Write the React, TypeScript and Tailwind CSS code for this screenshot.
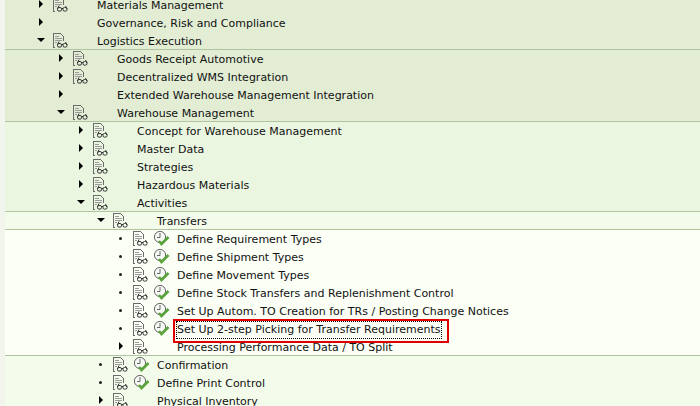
function Doc() {
  return (
    <svg width="17" height="18" viewBox="0 0 17 18" className="shrink-0">
      <g shapeRendering="crispEdges">
        <path d="M1.5 15V1.5H8.5L11.5 4.5V9" fill="none" stroke="#6b6b6b" />
        <path d="M1 15.5h2" stroke="#6b6b6b" />
        <path d="M3 4h4M3 6h7M3 8h7M3 10h2" stroke="#9a9a9a" />
      </g>
      <g fill="none" stroke="#333" strokeWidth="1">
        <rect x="5.5" y="11.5" width="4" height="3.6" rx="1.4" />
        <rect x="11" y="11.5" width="4" height="3.6" rx="1.4" />
        <path d="M9.5 12.5h1.5M5.5 13 7 9.5M15 13 13.5 10" />
      </g>
    </svg>
  );
}

function Clock() {
  return (
    <svg width="18" height="18" viewBox="0 0 18 18" className="shrink-0">
      <circle cx="8" cy="7" r="5.6" fill="#f7f9f5" stroke="#666" />
      <path d="M8 3v4.5H5" fill="none" stroke="#666" />
      <path d="M7 11 9.5 14 16.5 7" fill="none" stroke="#5aa33c" strokeWidth="2.6" />
    </svg>
  );
}

function Marker({ kind }: { kind: "r" | "d" | "b" }) {
  return (
    <span className="mb-[2px] flex h-[9px] w-[9px] shrink-0 items-center justify-center">
      {kind === "r" && <span className="h-0 w-0 border-y-[4px] border-l-[4px] border-y-transparent border-l-black" />}
      {kind === "d" && <span className="h-0 w-0 border-x-[4px] border-t-[4px] border-x-transparent border-t-black" />}
      {kind === "b" && <span className="h-[3px] w-[3px] rounded-full bg-[#222]" />}
    </span>
  );
}

type RowP = { level: number; kind: "r" | "d" | "b"; doc?: boolean; clock?: boolean; text: string; selected?: boolean; line?: boolean };

function Row({ level, kind, doc = true, clock, text, selected, line }: RowP) {
  const pad = ["pl-[31px]", "pl-[51px]", "pl-[71px]", "pl-[91px]", "pl-[111px]"][level];
  return (
    <div className={`flex h-[18px] items-center ${pad} ${line ? "shadow-[inset_0_-1px_0_#b0c4a0]" : ""}`}>
      <Marker kind={kind} />
      <span className="ml-[7px] flex w-[20px] shrink-0 items-center">{doc && <Doc />}</span>
      {clock ? (
        <span className="flex w-[25px] shrink-0 items-center"><Clock /></span>
      ) : (
        <span className="w-[25px] shrink-0" />
      )}
      <span className="pt-[2px]">
        <span className={`relative block whitespace-nowrap text-[11px] leading-[16px] text-[#111] ${selected ? "outline outline-1 outline-dotted outline-black" : ""}`}>
          {text}
          {selected && <span className="absolute -bottom-[5px] -left-[4px] -right-[8px] -top-[3px] border-2 border-[#e00000]" />}
        </span>
      </span>
    </div>
  );
}

export default function App() {
  return (
    <div className="h-[406px] w-[700px] overflow-hidden bg-[#f2f5ee] pl-[5px] font-['DejaVu_Sans',sans-serif]">
      <div className="-mt-[4px] h-[410px] overflow-hidden">
        <div className="bg-[#e2edd4]">
          <Row level={0} kind="r" text="Materials Management" />
          <Row level={0} kind="r" doc={false} text="Governance, Risk and Compliance" />
          <Row level={0} kind="d" text="Logistics Execution" line />
          <Row level={1} kind="r" text="Goods Receipt Automotive" />
          <Row level={1} kind="r" text="Decentralized WMS Integration" />
          <Row level={1} kind="r" doc={false} text="Extended Warehouse Management Integration" />
          <Row level={1} kind="d" text="Warehouse Management" line />
        </div>
        <div className="bg-[#ebf6e0]">
          <Row level={2} kind="r" text="Concept for Warehouse Management" />
          <Row level={2} kind="r" text="Master Data" />
          <Row level={2} kind="r" text="Strategies" />
          <Row level={2} kind="r" text="Hazardous Materials" />
          <Row level={2} kind="d" text="Activities" line />
        </div>
        <div className="bg-[#f3fbea]">
          <Row level={3} kind="d" text="Transfers" line />
        </div>
        <div className="bg-[#fbfff6]">
          <Row level={4} kind="b" clock text="Define Requirement Types" />
          <Row level={4} kind="b" clock text="Define Shipment Types" />
          <Row level={4} kind="b" clock text="Define Movement Types" />
          <Row level={4} kind="b" clock text="Define Stock Transfers and Replenishment Control" />
          <Row level={4} kind="b" clock text="Set Up Autom. TO Creation for TRs / Posting Change Notices" />
          <Row level={4} kind="b" clock text="Set Up 2-step Picking for Transfer Requirements" selected />
          <Row level={4} kind="r" text="Processing Performance Data / TO Split" line />
        </div>
        <div className="bg-[#f3fbea] pb-[10px]">
          <Row level={3} kind="b" clock text="Confirmation" />
          <Row level={3} kind="b" clock text="Define Print Control" />
          <Row level={3} kind="r" text="Physical Inventory" />
        </div>
      </div>
    </div>
  );
}
